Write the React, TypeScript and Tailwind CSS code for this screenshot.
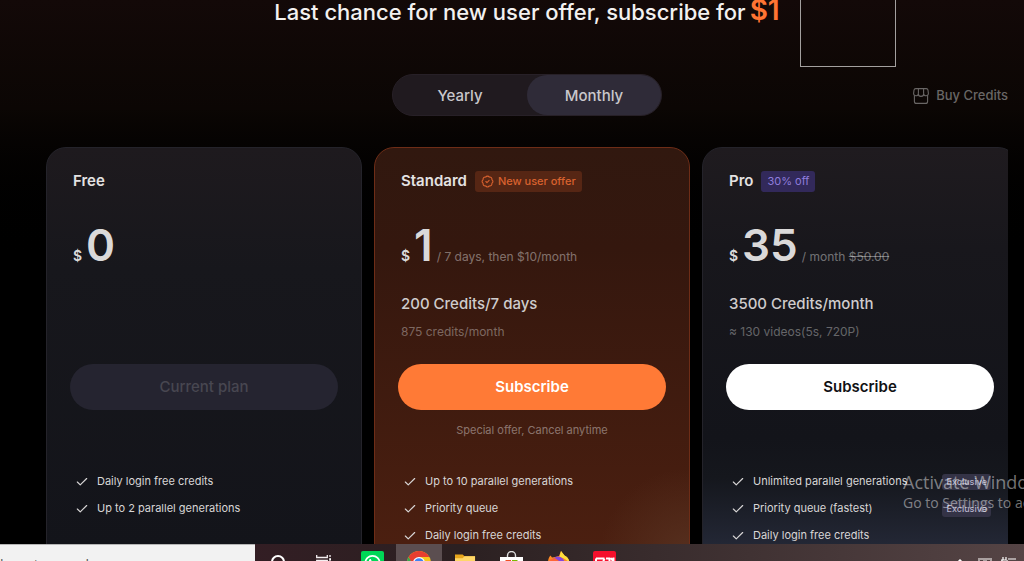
import React, { useState } from "react";
import { BadgeCheck, Check } from "lucide-react";

type Feature = { label: string; exclusive?: boolean };

type Plan = {
  name: string;
  badge?: React.ReactNode;
  price: string;
  period?: React.ReactNode;
  credits?: string;
  detail?: string;
  action: string;
  disabled?: boolean;
  note?: string;
  features: Feature[];
  cardClass: string;
  buttonClass: string;
};

const plans: Plan[] = [
  {
    name: "Free",
    price: "0",
    action: "Current plan",
    disabled: true,
    features: [
      { label: "Daily login free credits" },
      { label: "Up to 2 parallel generations" },
    ],
    cardClass:
      "border-[#24232a] bg-linear-to-b from-[#1e1a1e] via-[#17171c] via-30% to-[#13141a]",
    buttonClass: "bg-[#252430] font-medium text-[#484751]",
  },
  {
    name: "Standard",
    badge: (
      <span className="flex h-[21px] items-center gap-1 rounded-[3px] bg-[#562614] px-[6px] text-[11px] font-medium text-[#d9622f]">
        <BadgeCheck className="size-[13px]" strokeWidth={2} aria-hidden />
        New user offer
      </span>
    ),
    price: "1",
    period: "/ 7 days, then $10/month",
    credits: "200 Credits/7 days",
    detail: "875 credits/month",
    action: "Subscribe",
    note: "Special offer, Cancel anytime",
    features: [
      { label: "Up to 10 parallel generations" },
      { label: "Priority queue" },
      { label: "Daily login free credits" },
    ],
    cardClass:
      "border-[#6e2d17] bg-[radial-gradient(circle_at_100%_410px,#56301f_0%,#56301f00_90px),linear-gradient(to_bottom,#31180f_0px,#34170e_100px,#4b1f10_397px)]",
    buttonClass: "bg-[#ff7a36] font-semibold text-white",
  },
  {
    name: "Pro",
    badge: (
      <span className="flex h-[21px] items-center rounded-[3px] bg-[#32295a] px-[6px] text-[11px] text-[#8f7ddd]">
        30% off
      </span>
    ),
    price: "35",
    period: (
      <>
        / month <s>$50.00</s>
      </>
    ),
    credits: "3500 Credits/month",
    detail: "≈ 130 videos(5s, 720P)",
    action: "Subscribe",
    features: [
      { label: "Unlimited parallel generations", exclusive: true },
      { label: "Priority queue (fastest)", exclusive: true },
      { label: "Daily login free credits" },
    ],
    cardClass:
      "border-[#24232a] bg-[linear-gradient(to_bottom,#1f1b1f_0px,#18171c_100px,#13141a_290px,#15171d_330px,#232735_397px)]",
    buttonClass: "bg-white font-semibold text-[#111114]",
  },
];

function CreditsIcon() {
  return (
    <svg
      viewBox="0 0 16 16"
      className="size-4"
      fill="none"
      stroke="currentColor"
      strokeWidth="1.1"
      strokeLinejoin="round"
      aria-hidden
    >
      <path d="M1.4 7.200v6.200a2 2 0 0 0 2 2h9.200a2 2 0 0 0 2-2V7.200" />
      <path d="M2.800.600h10.400a1.800 1.800 0 0 1 1.800 1.500l.4 3.400a2.200 2.200 0 0 1-2.300 2.300c-1.200 0-2.300-.9-2.400-2.100a2.600 2.600 0 0 1-5.400 0c-.1 1.200-1.200 2.100-2.400 2.100A2.200 2.200 0 0 1 .6 5.500L1 2.100A1.800 1.800 0 0 1 2.800.600Z" />
      <path d="M5.400.600v5.200M10.600.600v5.200" />
    </svg>
  );
}

function PlanCard({ plan }: { plan: Plan }) {
  return (
    <article
      className={`flex w-79 shrink-0 flex-col rounded-t-[20px] border px-[23px] pt-[23px] ${plan.cardClass}`}
    >
      <div className="flex h-5 items-center gap-2 px-[3px]">
        <h2 className="text-[15px] font-semibold text-[#e4e2e2]">{plan.name}</h2>
        {plan.badge}
      </div>
      <p className="mt-[30px] flex h-12 items-baseline px-[3px] text-[#dad9d9]">
        <span className="text-sm font-semibold">$</span>
        <span className="ml-1 text-[44px] leading-12 font-semibold">
          {plan.price}
        </span>
        <span className="ml-1 text-xs text-white/40">{plan.period}</span>
      </p>
      <p className="mt-[23px] h-6 px-[3px] text-[15px] leading-6 font-medium text-[#cfcccc]">
        {plan.credits}
      </p>
      <p className="mt-2 h-4 px-[3px] text-xs leading-4 text-white/35">
        {plan.detail}
      </p>
      <button
        type="button"
        disabled={plan.disabled}
        className={`mt-6 h-[46px] rounded-full text-[15px] ${plan.buttonClass}`}
      >
        {plan.action}
      </button>
      <p className="mt-3 h-4 text-center text-[11px] leading-4 text-white/40">
        {plan.note}
      </p>
      <ul className="mt-[30px] pr-[3px] pl-[5px] text-[11px] leading-[27px] text-[#d8d6d6]">
        {plan.features.map((feature) => (
          <li key={feature.label} className="flex items-center gap-2">
            <Check className="size-[14px]" strokeWidth={2} aria-hidden />
            {feature.label}
            {feature.exclusive && (
              <span className="ml-auto rounded-[3px] bg-[#343346] px-1 text-[9px] leading-4 font-medium text-[#b4b1c8]">
                Exclusive
              </span>
            )}
          </li>
        ))}
      </ul>
    </article>
  );
}

function BillingToggle() {
  const [period, setPeriod] = useState("Monthly");
  return (
    <div className="flex rounded-full border border-[#272027] bg-[#201a1f] text-[15px] text-[#c9c7cb]">
      {["Yearly", "Monthly"].map((option) => (
        <button
          key={option}
          type="button"
          aria-pressed={period === option}
          onClick={() => setPeriod(option)}
          className={`h-10 w-[134px] rounded-full pt-0.5 font-medium ${
            period === option ? "bg-[#2f2b38]" : ""
          }`}
        >
          {option}
        </button>
      ))}
    </div>
  );
}

function Taskbar() {
  return (
    <footer className="flex h-[17px] shrink-0 items-start overflow-hidden bg-linear-to-r from-[#3b1a27] via-[#2b2021] via-45% to-[#554445]">
      <input
        type="search"
        aria-label="Search"
        placeholder="here to search"
        className="h-9 w-[255px] border-t border-[#b5b5b5] bg-[#f2f2f2] pt-1 font-['Open_Sans',sans-serif] text-sm text-[#333] placeholder:text-[#555]"
      />
      <svg className="mt-[11px] ml-4 size-[14px]" viewBox="0 0 14 14" fill="none" stroke="#fff" strokeWidth="2" aria-hidden>
        <circle cx="7" cy="7" r="6" />
      </svg>
      <svg className="mt-[11px] ml-[31px] h-4 w-4" viewBox="0 0 16 16" fill="none" stroke="#f4eef0" strokeWidth="1.3" aria-hidden>
        <path d="M.7 0v2.5h10.6V0M.7 5.5h10.6v7H.7zM14 0v2M14 5v9" />
        <rect x="13.2" y="3.2" width="1.8" height="1.8" fill="#fff" stroke="none" />
      </svg>
      <svg className="mt-[7px] ml-[29px] h-6 w-[23px]" viewBox="0 0 23 24" fill="none" aria-hidden>
        <rect width="23" height="24" rx="2" fill="#00d757" />
        <circle cx="11.5" cy="12" r="7.2" stroke="#fff" strokeWidth="1.7" />
        <path d="M8 9.5c0-1 1.5-2 2-1l.6 1.5-.7 1c.6 1.300 1.500 2.200 2.900 2.800l1-.9 1.700.8c.8.5-.4 2-1.600 2C10.800 15.700 8 12.500 8 9.500Z" fill="#fff" />
      </svg>
      <div className="ml-3 flex h-10 w-[46px] justify-center bg-[#5b4e50] pt-[7px]">
        <svg className="size-6" viewBox="0 0 24 24" aria-hidden>
          <circle cx="12" cy="12" r="12" fill="#f8c71c" />
          <path d="M12 12 6.200 15.400 1.600 6A12 12 0 0 1 22.400 6H12Z" fill="#e83e2f" />
          <path d="M1.600 6 6.800 15 12 17.500 9 23.600A12 12 0 0 1 1.600 6Z" fill="#35a853" />
          <circle cx="12" cy="12" r="6" fill="#fff" />
          <circle cx="12" cy="12" r="4.800" fill="#3f83f3" />
        </svg>
      </div>
      <svg className="mt-[9px] ml-[13px] h-5 w-[21px]" viewBox="0 0 22 20" aria-hidden>
        <path d="M0 1h8l2 2h11v15H0Z" fill="#e8a61c" />
        <path d="M0 5h8l2-2h11v15H0Z" fill="#ffd768" />
      </svg>
      <svg className="mt-[7px] ml-[24px] h-6 w-[23px]" viewBox="0 0 23 24" aria-hidden>
        <path d="M7.500 7V4.500a4 4 0 0 1 8 0V7" fill="none" stroke="#ddd" strokeWidth="1.400" />
        <path d="M0 6h23v16H0Z" fill="#fff" />
        <path d="M5.500 9h5.500v4H5.500Z" fill="#f04e23" />
        <path d="M12 9h5.500v4H12Z" fill="#7cb900" />
      </svg>
      <svg className="mt-[7px] ml-[24px] h-6 w-[23px]" viewBox="0 0 23 24" aria-hidden>
        <path d="M1 12C1 8 2 6 3.500 4.500L5 6.500 8 6l4-1 2-5 3.500 4.500C21 6 22.500 9 22.500 13a11 11 0 0 1-21.500-1Z" fill="#ff8a24" />
        <path d="M14 0l3.500 4.500C21 6 22.500 9 22.500 13c-2-5-7-6-10-7Z" fill="#ffdf3c" />
        <circle cx="11" cy="12" r="6.500" fill="#8547db" />
        <path d="M2 9l6-2 4 3-5 2Z" fill="#ff6436" />
      </svg>
      <svg className="mt-[7px] ml-[23px] h-6 w-[23px]" viewBox="0 0 23 24" fill="none" aria-hidden>
        <rect width="23" height="24" rx="2" fill="#f5102c" />
        <path d="M3 7.500h8.500M3 7.500V16M3 11h7M11.500 7.500 8 16M13 7.500h3.500V16M18 7l2 3M20.500 6.500v4" stroke="#fff" strokeWidth="2" />
      </svg>
      <div className="mr-2 ml-auto flex gap-[13px] pt-[15px] text-white">
        <svg className="h-2 w-[10px]" viewBox="0 0 10 8" fill="none" stroke="currentColor" strokeWidth="1.500" aria-hidden>
          <path d="m1 5 4-4 4 4" />
        </svg>
        <svg className="-mt-px h-2 w-[14px]" viewBox="0 0 14 8" fill="none" stroke="#aaa0a0" strokeWidth="2" aria-hidden>
          <path d="M1 8V1h5v7M8 8V1h5v7" />
        </svg>
        <svg className="-mt-0.5 -ml-1 h-2 w-[15px]" viewBox="0 0 15 8" fill="none" stroke="currentColor" strokeWidth="1.200" aria-hidden>
          <path d="M2 0v3M5 0v3M0 3h5M7 2h8M1 3v5M6 3v5" />
        </svg>
      </div>
    </footer>
  );
}

export default function App() {
  return (
    <div className="flex h-screen flex-col overflow-hidden bg-black font-['Inter',sans-serif]">
      <main className="relative min-h-0 flex-1 overflow-hidden bg-linear-to-b from-[#130908] via-[#0b0604] via-20% to-black to-50% pr-4 pl-[46px]">
        <header className="flex h-[74px] justify-center">
          <div className="relative flex items-start">
            <h1 className="-mt-[10px] flex h-10 items-baseline gap-1 text-[22px] leading-10 font-medium whitespace-nowrap text-[#f3f1f0]">
              Last chance for new user offer, subscribe for
              <span className="text-[28px] font-semibold text-[#ff7433]">$1</span>
            </h1>
            <div className="absolute top-0 left-full ml-5 h-[67px] w-24 border border-t-0 border-[#a3a09f]" />
          </div>
        </header>

        <div className="grid grid-cols-[1fr_auto_1fr] items-center">
          <div className="col-start-2">
            <BillingToggle />
          </div>
          <a
            href="#credits"
            className="flex items-center gap-[7px] justify-self-end pt-px text-[13px] font-medium text-[#696665]"
          >
            <CreditsIcon />
            Buy Credits
          </a>
        </div>

        <section
          aria-label="Plans"
          className="mt-[31px] flex gap-3 overflow-hidden"
        >
          {plans.map((plan) => (
            <PlanCard key={plan.name} plan={plan} />
          ))}
        </section>

        <aside className="pointer-events-none absolute bottom-[31px] left-[903px] font-['Open_Sans',sans-serif] whitespace-nowrap text-white/45">
          <p className="text-lg leading-[22px]">Activate Windows</p>
          <p className="text-sm leading-5">Go to Settings to activate Windows.</p>
        </aside>
      </main>
      <Taskbar />
    </div>
  );
}
